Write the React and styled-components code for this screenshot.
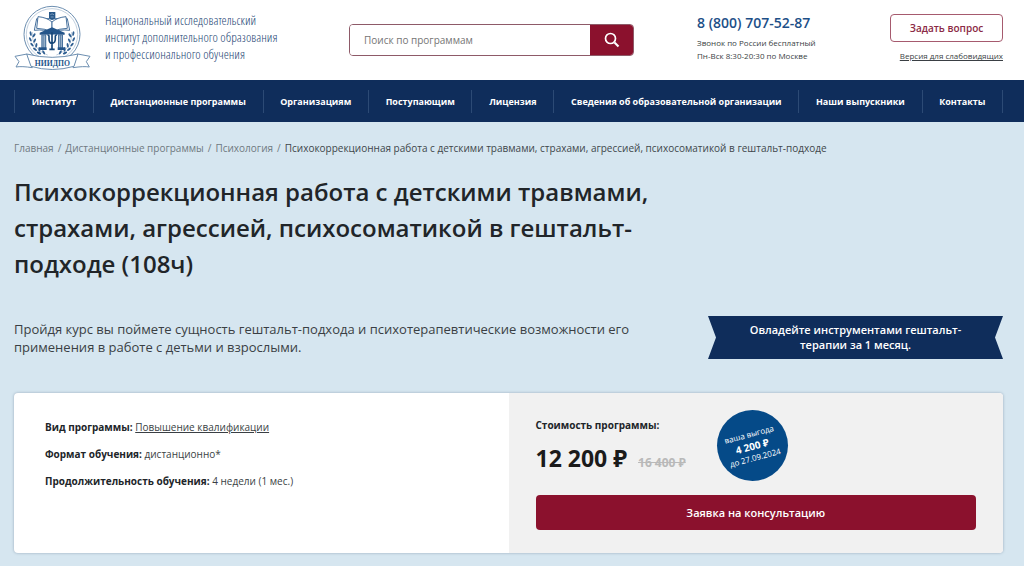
import React, { useState } from "react"
import styled, { createGlobalStyle } from "styled-components"

const menu = [
  "Институт",
  "Дистанционные программы",
  "Организациям",
  "Поступающим",
  "Лицензия",
  "Сведения об образовательной организации",
  "Наши выпускники",
  "Контакты",
]

const crumbs = ["Главная", "Дистанционные программы", "Психология"]

// [x, y, angle] of the leaves on the left branch, the right one is mirrored
const leaves = [
  [89, 103, -10],
  [99, 108, 35],
  [88, 120, -25],
  [101, 124, 25],
  [93, 136, -40],
  [106, 138, 10],
  [102, 150, -52],
  [115, 150, -5],
  [114, 161, -65],
  [128, 159, -30],
]

function Branch() {
  return (
    <g>
      <path d="M94 98C92 130 108 156 140 167" fill="none" stroke="#47719d" strokeWidth="1" />
      {leaves.map(([x, y, angle]) => (
        <ellipse
          key={`${x}-${y}`}
          cx={x}
          cy={y}
          rx="3"
          ry="7"
          fill="#2f5f92"
          transform={`rotate(${angle} ${x} ${y})`}
        />
      ))}
    </g>
  )
}

function Logo() {
  return (
    <LogoSvg viewBox="39 14 231 201" role="img" aria-label="НИИДПО">
      <circle cx="153" cy="105" r="84" fill="#fff" stroke="#6d8fb1" strokeWidth="3" />
      <circle cx="153" cy="105" r="77" fill="none" stroke="#a3b8cd" strokeWidth="2" />
      <Branch />
      <g transform="translate(306 0) scale(-1 1)">
        <Branch />
      </g>
      <g fill="#fff" stroke="#47719d" strokeWidth="3" strokeLinejoin="round">
        <path d="M107 58L100 93Q130 89 153 100Q176 89 206 93L199 58Z" />
        <path d="M111 52Q137 54 153 68L153 99Q134 87 107 87Z" />
        <path d="M195 52Q169 54 153 68L153 99Q172 87 199 87Z" />
      </g>
      <path d="M144 38H163V55Q161 60 153 62Q146 60 144 55Z" fill="#285889" />
      <path d="M148 46Q153 41 159 46M149 53H158" fill="none" stroke="#a9c0d6" strokeWidth="2" />
      <path d="M116 100L153 84L191 100V106H116Z" fill="#24558a" />
      <path d="M121 106H136V146H121ZM171 106H186V146H171Z" fill="#47719d" />
      <path d="M126 108V145M131 108V145M176 108V145M181 108V145" stroke="#d7e2ed" strokeWidth="2" />
      <path d="M116 144H191V152H116Z" fill="#24558a" />
      <path d="M137 106H170V152H137Z" fill="#fff" />
      <path
        d="M153 99V151M145 150H161M139 107Q145 106 144 115Q143 132 153 132Q164 132 163 115Q162 106 168 107"
        fill="none"
        stroke="#174778"
        strokeWidth="5"
      />
      <g fill="#fff" stroke="#6d8fb1" strokeWidth="3" strokeLinejoin="round">
        <path d="M78 164L42 171L54 187L45 203Q62 200 94 205Z" />
        <path d="M230 164L267 171L256 187L265 203Q248 200 216 205Z" />
        <path d="M77 164Q153 184 231 164L219 201Q153 220 90 201Z" />
      </g>
      <text x="154" y="199" textAnchor="middle" fontSize="23" fontWeight="700" fill="#24558a">
        НИИДПО
      </text>
    </LogoSvg>
  )
}

export default function App() {
  const [query, setQuery] = useState("")

  return (
    <>
      <GlobalStyle />
      <Header>
        <Brand href="#">
          <Logo />
          <BrandName>
            Национальный исследовательский
            <br />
            институт дополнительного образования
            <br />и профессионального обучения
          </BrandName>
        </Brand>
        <Search onSubmit={(e) => e.preventDefault()}>
          <SearchInput
            type="search"
            aria-label="Поиск по программам"
            placeholder="Поиск по программам"
            value={query}
            onChange={(e) => setQuery(e.target.value)}
          />
          <SearchButton type="submit" aria-label="Найти">
            <svg width="16" height="16" viewBox="0 0 16 16" fill="none" stroke="currentColor">
              <circle cx="6.5" cy="6.5" r="5" strokeWidth="1.7" />
              <path d="M10.5 10.5L14.5 14.5" strokeWidth="2.2" />
            </svg>
          </SearchButton>
        </Search>
        <Contacts>
          <Phone href="tel:88007075287">8 (800) 707-52-87</Phone>
          <Hours>
            Звонок по России бесплатный
            <br />
            Пн-Вск 8:30-20:30 по Москве
          </Hours>
        </Contacts>
        <Actions>
          <AskButton type="button">Задать вопрос</AskButton>
          <VersionLink href="#">Версия для слабовидящих</VersionLink>
        </Actions>
      </Header>

      <Nav>
        <Menu>
          {menu.map((item) => (
            <MenuItem key={item}>
              <MenuLink href="#">{item}</MenuLink>
            </MenuItem>
          ))}
        </Menu>
      </Nav>

      <Main>
        <Breadcrumbs>
          {crumbs.map((item) => (
            <React.Fragment key={item}>
              <Crumb href="#">{item}</Crumb>
              <span>/</span>
            </React.Fragment>
          ))}
          <Current>
            Психокоррекционная работа с детскими травмами, страхами, агрессией, психосоматикой в
            гештальт-подходе
          </Current>
        </Breadcrumbs>
        <Title>
          Психокоррекционная работа с детскими травмами, страхами, агрессией, психосоматикой в
          гештальт-подходе (108ч)
        </Title>
        <Intro>
          <Lead>
            Пройдя курс вы поймете сущность гештальт-подхода и психотерапевтические возможности его
            применения в работе с детьми и взрослыми.
          </Lead>
          <Ribbon>Овладейте инструментами гештальт-терапии за 1 месяц.</Ribbon>
        </Intro>

        <Card>
          <Details>
            <Detail>
              <b>Вид программы:</b> <a href="#">Повышение квалификации</a>
            </Detail>
            <Detail>
              <b>Формат обучения:</b> дистанционно*
            </Detail>
            <Detail>
              <b>Продолжительность обучения:</b> 4 недели (1 мес.)
            </Detail>
          </Details>
          <Offer>
            <PriceRow>
              <div>
                <PriceLabel>Стоимость программы:</PriceLabel>
                <Prices>
                  <Price>12 200 ₽</Price>
                  <OldPrice>16 400 ₽</OldPrice>
                </Prices>
              </div>
              <Benefit>
                <BenefitText>
                  ваша выгода
                  <b>4 200 ₽</b>
                  до 27.09.2024
                </BenefitText>
              </Benefit>
            </PriceRow>
            <OrderButton type="button">Заявка на консультацию</OrderButton>
          </Offer>
        </Card>
      </Main>
    </>
  )
}

const GlobalStyle = createGlobalStyle`
  * {
    box-sizing: border-box;
  }
  body {
    margin: 0;
    background: #d6e6f0;
    color: #3a3f44;
    font-family: "Open Sans", "Noto Sans", sans-serif;
    font-size: 10px;
  }
  button,
  input {
    font-family: inherit;
  }
`

const Header = styled.header`
  display: grid;
  grid-template-columns: 335fr 348fr 173fr 133fr;
  align-items: center;
  height: 80px;
  padding: 0 21px 0 14px;
  background: #fff;
`

const Brand = styled.a`
  display: flex;
  align-items: center;
  gap: 14px;
  padding-bottom: 6px;
  color: #1d4674;
  text-decoration: none;
`

const LogoSvg = styled.svg`
  flex: none;
  width: 77px;
  height: 67px;
  font-family: "Liberation Serif", serif;
`

const BrandName = styled.span`
  font-family: "Open Sans Condensed Light", "Open Sans Condensed", "Open Sans", sans-serif;
  font-size: 13px;
  font-weight: 300;
  line-height: 17px;
  white-space: nowrap;
`

const Search = styled.form`
  display: flex;
  width: 82%;
  height: 32px;
  border: 1px solid #8e5a68;
  border-radius: 4px;
  overflow: hidden;
`

const SearchInput = styled.input`
  flex: 1;
  min-width: 0;
  padding: 0 14px;
  border: 0;
  outline: 0;
  color: #333;
  font-size: 10px;

  &::placeholder {
    color: #757575;
  }
`

const SearchButton = styled.button`
  display: flex;
  align-items: center;
  justify-content: center;
  width: 43px;
  padding: 0;
  border: 0;
  background: #8b112d;
  color: #fff;
`

const Contacts = styled.div`
  display: flex;
  flex-direction: column;
  gap: 4px;
  padding-bottom: 4px;
`

const Phone = styled.a`
  color: #1d4f87;
  font-size: 14px;
  font-weight: 600;
  line-height: 18px;
  text-decoration: none;
`

const Hours = styled.div`
  font-size: 8px;
  line-height: 13px;
`

const Actions = styled.div`
  display: flex;
  flex-direction: column;
  align-items: flex-end;
  gap: 7px;
  padding-bottom: 4px;
`

const AskButton = styled.button`
  width: 113px;
  height: 28px;
  padding: 0;
  border: 1px solid #a65a6e;
  border-radius: 4px;
  background: #fff;
  color: #8b2a45;
  font-size: 10px;
  font-weight: 600;
`

const VersionLink = styled.a`
  color: #3a3f44;
  font-size: 8px;
  line-height: 13px;
  white-space: nowrap;
`

const Nav = styled.nav`
  padding: 10px 21px 9px 14px;
  background: #0f2d5b;
`

const Menu = styled.ul`
  display: flex;
  margin: 0;
  padding: 0;
  border-left: 1px solid #2c4a75;
  list-style: none;
`

const MenuItem = styled.li`
  flex: 1 0 auto;
  border-right: 1px solid #2c4a75;
  text-align: center;
`

const MenuLink = styled.a`
  color: #fff;
  font-size: 9px;
  font-weight: 700;
  line-height: 23px;
  text-decoration: none;
  white-space: nowrap;
`

const Main = styled.main`
  padding: 19px 21px 12px 14px;
`

const Breadcrumbs = styled.nav`
  display: flex;
  gap: 4px;
  color: #6f7980;
  font-size: 10px;
  line-height: 14px;
  white-space: nowrap;
`

const Crumb = styled.a`
  color: inherit;
  text-decoration: none;
`

const Current = styled.span`
  color: #3f464b;
`

const Title = styled.h1`
  max-width: 660px;
  margin: 19px 0 34px;
  color: #212529;
  font-size: 24px;
  font-weight: 600;
  line-height: 36px;
`

const Intro = styled.div`
  display: flex;
  align-items: center;
  justify-content: space-between;
`

const Lead = styled.p`
  max-width: 620px;
  margin: 0;
  font-size: 13px;
  line-height: 18px;
`

const Ribbon = styled.div`
  width: 295px;
  padding: 6px 36px 7px;
  background: #0f2d5b;
  clip-path: polygon(0 0, 100% 0, calc(100% - 8px) 50%, 100% 100%, 0 100%, 8px 50%);
  color: #fff;
  font-size: 11px;
  font-weight: 600;
  line-height: 15px;
  text-align: center;
`

const Card = styled.section`
  display: grid;
  grid-template-columns: 1fr 1fr;
  margin-top: 34px;
  border-radius: 4px;
  background: #fff;
  box-shadow: 0 0 3px rgba(60, 80, 110, 0.4);
  overflow: hidden;
`

const Details = styled.div`
  display: flex;
  flex-direction: column;
  gap: 13px;
  padding: 27px 31px;
`

const Detail = styled.div`
  font-size: 10px;
  line-height: 14px;

  b {
    color: #212529;
  }

  a {
    color: inherit;
  }
`

const Offer = styled.div`
  padding: 17px 27px 23px;
  background: #f1f1f1;
`

const PriceRow = styled.div`
  display: flex;
  align-items: flex-start;
  gap: 31px;
`

const PriceLabel = styled.div`
  margin-top: 8px;
  color: #212529;
  font-size: 10px;
  font-weight: 700;
  line-height: 14px;
`

const Prices = styled.div`
  display: flex;
  align-items: baseline;
  gap: 11px;
  margin-top: 9px;
  white-space: nowrap;
`

const Price = styled.span`
  color: #1b1b1b;
  font-size: 23px;
  font-weight: 700;
  line-height: 34px;
`

const OldPrice = styled.s`
  color: #b9b9b9;
  font-size: 12px;
  font-weight: 700;
`

const Benefit = styled.div`
  display: flex;
  align-items: center;
  justify-content: center;
  width: 71px;
  height: 71px;
  border-radius: 50%;
  background: #054a88;
  color: #fff;
`

const BenefitText = styled.div`
  font-size: 8px;
  line-height: 12px;
  text-align: center;
  white-space: nowrap;
  transform: rotate(-15deg);

  b {
    display: block;
    font-size: 10px;
  }
`

const OrderButton = styled.button`
  display: block;
  width: 100%;
  height: 35px;
  margin-top: 14px;
  border: 0;
  border-radius: 4px;
  background: #8b112d;
  color: #fff;
  font-size: 11px;
  font-weight: 600;
`
